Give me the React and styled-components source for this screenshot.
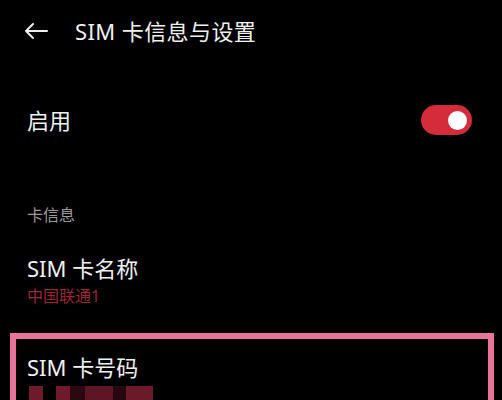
import React from 'react';
import styled, { createGlobalStyle } from 'styled-components';

const GlobalStyle = createGlobalStyle`
  html, body {
    margin: 0;
    padding: 0;
    background: #000;
  }
  body {
    font-family: "Noto Sans", "Noto Sans CJK SC", sans-serif;
    color: #f2f2f2;
  }
`;

const Screen = styled.div`
  width: 502px;
  height: 400px;
  overflow: hidden;
  background: #000;
`;

const TopBar = styled.div`
  height: 62px;
  display: flex;
  align-items: center;
  padding-left: 24px;
  gap: 27px;
`;

const BackButton = styled.svg`
  width: 24px;
  height: 18px;
  flex: none;
`;

const Title = styled.div`
  font-size: 22px;
  line-height: 26px;
  letter-spacing: 0.4px;
  color: #f0f0f0;
`;

const Row = styled.div`
  display: flex;
  align-items: center;
  justify-content: space-between;
  padding: 0 30px 0 27px;
  height: ${p => p.h}px;
`;

const Label = styled.div`
  font-size: 22px;
  line-height: 26px;
  color: #f0f0f0;
`;

const Toggle = styled.div`
  width: 51px;
  height: 30px;
  border-radius: 15px;
  background: #d42c3b;
  display: flex;
  align-items: center;
  justify-content: flex-end;
  padding-right: 5px;
  box-sizing: border-box;
`;

const Knob = styled.div`
  width: 19px;
  height: 19px;
  border-radius: 50%;
  background: #fff;
`;

const SectionHeader = styled.div`
  font-size: 16px;
  line-height: 18px;
  color: #9a9a9a;
  padding: 0 27px;
  margin-top: 28px;
`;

const Item = styled.div`
  display: flex;
  flex-direction: column;
  padding: 0 27px;
  margin-top: ${p => p.top}px;
`;

const Sub = styled.div`
  font-size: 16px;
  line-height: 18px;
  color: #9c2537;
  margin-top: 6px;
`;

const Highlight = styled.div`
  margin: 28px 8px 0 10px;
  border: 6px solid #e8739b;
  border-bottom: none;
  padding: 15px 11px 20px 11px;
`;

const Masked = styled.div`
  display: flex;
  margin-top: 6px;
  height: 16px;
`;

const Block = styled.div`
  width: ${p => p.w}px;
  margin-left: ${p => p.gap}px;
  background: ${p => p.c};
`;

export default function App() {
  return (
    <>
      <GlobalStyle />
      <Screen>
        <TopBar>
          <BackButton viewBox="0 0 24 18" fill="none" stroke="#f0f0f0" strokeWidth="2" strokeLinecap="round" strokeLinejoin="round">
            <path d="M2 9h21M9 2L2 9l7 7" />
          </BackButton>
          <Title>SIM 卡信息与设置</Title>
        </TopBar>
        <Row h={116}>
          <Label>启用</Label>
          <Toggle>
            <Knob />
          </Toggle>
        </Row>
        <SectionHeader>卡信息</SectionHeader>
        <Item top={31}>
          <Label>SIM 卡名称</Label>
          <Sub>中国联通1</Sub>
        </Item>
        <Highlight>
          <Label>SIM 卡号码</Label>
          <Masked>
            <Block w={14} gap={2} c="#6e1a2a" />
            <Block w={14} gap={13} c="#6e1a2a" />
            <Block w={15} gap={0} c="#2a0a10" />
            <Block w={28} gap={0} c="#5e1624" />
            <Block w={13} gap={0} c="#250810" />
            <Block w={27} gap={0} c="#6a1a28" />
          </Masked>
        </Highlight>
      </Screen>
    </>
  );
}
